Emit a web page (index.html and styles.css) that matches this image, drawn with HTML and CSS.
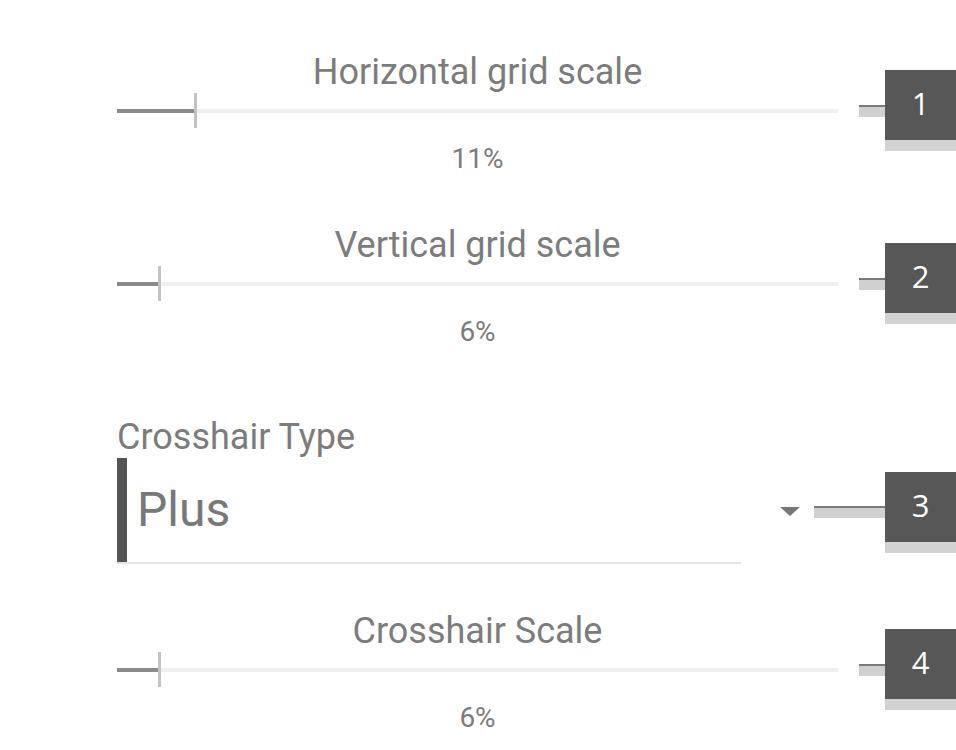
FILE: index.html
```
<!DOCTYPE html>
<html lang="en">
<head>
<meta charset="utf-8">
<title>Grid settings</title>
<link rel="stylesheet" href="styles.css">
</head>
<body>
<main class="panel">
  <section class="row row-slider">
    <div class="slider">
      <div class="slider-title">Horizontal grid scale</div>
      <div class="track">
        <div class="track-fill" style="width: 11%"></div>
        <div class="thumb"></div>
        <div class="track-rest"></div>
      </div>
      <div class="slider-value">11%</div>
    </div>
    <div class="callout">
      <div class="connector connector-short"></div>
      <div class="badge"><span class="badge-num">1</span></div>
    </div>
  </section>

  <section class="row row-slider">
    <div class="slider">
      <div class="slider-title">Vertical grid scale</div>
      <div class="track">
        <div class="track-fill" style="width: 6%"></div>
        <div class="thumb"></div>
        <div class="track-rest"></div>
      </div>
      <div class="slider-value">6%</div>
    </div>
    <div class="callout">
      <div class="connector connector-short"></div>
      <div class="badge"><span class="badge-num">2</span></div>
    </div>
  </section>

  <section class="row row-select">
    <div class="select">
      <div class="select-label">Crosshair Type</div>
      <div class="select-line">
        <div class="select-field">
          <div class="select-bar"></div>
          <div class="select-text">Plus</div>
        </div>
        <div class="select-arrow"></div>
      </div>
    </div>
    <div class="callout callout-select">
      <div class="connector connector-long"></div>
      <div class="badge"><span class="badge-num">3</span></div>
    </div>
  </section>

  <section class="row row-slider row-last">
    <div class="slider">
      <div class="slider-title">Crosshair Scale</div>
      <div class="track">
        <div class="track-fill" style="width: 6%"></div>
        <div class="thumb"></div>
        <div class="track-rest"></div>
      </div>
      <div class="slider-value">6%</div>
    </div>
    <div class="callout">
      <div class="connector connector-short"></div>
      <div class="badge"><span class="badge-num">4</span></div>
    </div>
  </section>
</main>
</body>
</html>
```
FILE: styles.css
```
html, body {
  margin: 0;
  padding: 0;
  background: #ffffff;
  overflow: hidden;
}

body {
  font-family: Roboto, "Liberation Sans", Arial, sans-serif;
  color: #7c7c7c;
}

.panel {
  width: 956px;
  padding: 51px 0 0 117px;
  box-sizing: border-box;
  display: flex;
  flex-direction: column;
}

.row {
  display: flex;
  align-items: flex-start;
}

.row-slider {
  margin-bottom: 49px;
}

.row-select {
  margin-top: 20px;
  margin-bottom: 46px;
}

.row-last {
  margin-bottom: 0;
}

/* Slider */
.slider {
  width: 721px;
  flex: 0 0 721px;
}

.slider-title {
  font-size: 36px;
  line-height: 42px;
  height: 42px;
  text-align: center;
  white-space: nowrap;
  color: #7c7c7c;
}

.track {
  height: 35px;
  display: flex;
  align-items: center;
}

.track-fill {
  height: 4px;
  background: #8a8a8a;
  flex: 0 0 auto;
}

.thumb {
  width: 3px;
  height: 35px;
  background: #c3c3c3;
  flex: 0 0 3px;
  margin-left: -2px;
}

.track-rest {
  flex: 1 1 auto;
  height: 4px;
  background: #f0f0f0;
}

.slider-value {
  margin-top: 15px;
  font-size: 28px;
  line-height: 32px;
  height: 32px;
  text-align: center;
  color: #7c7c7c;
}

/* Callout */
.callout {
  margin-left: auto;
  margin-top: 19px;
  display: flex;
  align-items: flex-start;
}

.callout-select {
  margin-top: 55px;
}

.connector {
  height: 10px;
  border-top: 2px solid #7a7a7a;
  background: #d0d0d0;
  margin-top: 35px;
}

.callout-select .connector {
  margin-top: 34px;
}

.connector-short {
  width: 26px;
}

.connector-long {
  width: 71px;
}

.badge {
  width: 71px;
  height: 70px;
  background: #575757;
  border-bottom: 11px solid #d2d2d2;
  display: flex;
  align-items: center;
  justify-content: center;
}

.badge-num {
  font-family: "Open Sans", "DejaVu Sans", sans-serif;
  font-size: 31px;
  line-height: 1;
  color: #ffffff;
  margin-top: -3px;
}

/* Select */
.select {
  width: 697px;
  flex: 0 0 697px;
}

.select-label {
  font-size: 36px;
  line-height: 40px;
  height: 40px;
  color: #7c7c7c;
  white-space: nowrap;
}

.select-line {
  margin-top: 1px;
  display: flex;
  align-items: center;
}

.select-field {
  width: 624px;
  height: 104px;
  border-bottom: 2px solid #e4e4e4;
  display: flex;
  align-items: center;
}

.select-bar {
  width: 10px;
  align-self: stretch;
  background: #555555;
}

.select-text {
  padding-left: 10px;
  font-size: 48px;
  line-height: 56px;
  color: #787878;
}

.select-arrow {
  margin-left: 39px;
  width: 0;
  height: 0;
  border-left: 10px solid transparent;
  border-right: 10px solid transparent;
  border-top: 9px solid #777777;
}
```
